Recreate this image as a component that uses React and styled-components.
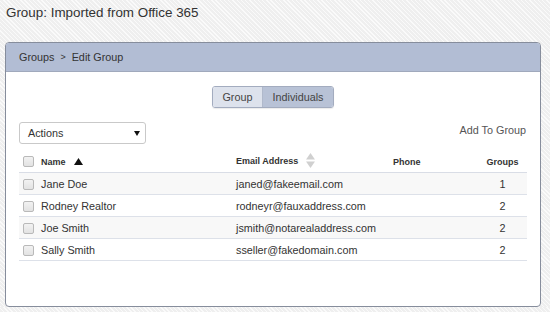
import React from 'react'
import styled, { createGlobalStyle } from 'styled-components'

const GlobalStyle = createGlobalStyle`
  html, body {
    margin: 0;
    padding: 0;
  }
  body {
    font-family: 'Liberation Sans', Arial, sans-serif;
    color: #333;
    background-color: #efefef;
    background-image: repeating-linear-gradient(
      45deg,
      rgba(255, 255, 255, 0.7) 0px,
      rgba(255, 255, 255, 0.7) 1px,
      transparent 1px,
      transparent 3px
    );
  }
`

const people = [
  { name: 'Jane Doe', email: 'janed@fakeemail.com', phone: '', groups: 1 },
  { name: 'Rodney Realtor', email: 'rodneyr@fauxaddress.com', phone: '', groups: 2 },
  { name: 'Joe Smith', email: 'jsmith@notarealaddress.com', phone: '', groups: 2 },
  { name: 'Sally Smith', email: 'sseller@fakedomain.com', phone: '', groups: 2 },
]

const Page = styled.div`
  padding: 4px 10px 0 5px;
  width: 550px;
  box-sizing: border-box;
`

const Title = styled.h1`
  margin: 0 0 0 1px;
  font-size: 13.4px;
  line-height: 18px;
  font-weight: normal;
  color: #333;
`

const Panel = styled.section`
  margin-top: 20px;
  width: 536px;
  height: 265px;
  box-sizing: border-box;
  border: 1px solid #868d9c;
  border-radius: 4px;
  background: #fff;
  overflow: hidden;
`

const PanelHeader = styled.div`
  display: flex;
  align-items: center;
  height: 28px;
  padding-left: 13px;
  background: #b2bdd4;
  border-bottom: 1px solid #a0a9bc;
  font-size: 10.8px;
  color: #333;
`

const Crumb = styled.span`
  margin: 0 ${(p) => (p.sep ? '6px' : '0')};
  font-size: ${(p) => (p.sep ? '9px' : 'inherit')};
`

const PanelBody = styled.div`
  padding: 14px 13px 0;
`

const ToggleRow = styled.div`
  display: flex;
  justify-content: center;
`

const ToggleGroup = styled.div`
  display: flex;
  border: 1px solid #a3acbf;
  border-radius: 3px;
  overflow: hidden;
  box-shadow: 0 1px 1px rgba(0, 0, 0, 0.08);
`

const ToggleButton = styled.div`
  height: 20px;
  line-height: 20px;
  padding: 0 9.5px;
  font-size: 10.8px;
  color: #444;
  background: ${(p) => (p.active ? '#b8c2d6' : '#dde2ec')};
  & + & {
    border-left: 1px solid #b0b9cb;
  }
`

const ActionsRow = styled.div`
  display: flex;
  justify-content: space-between;
  align-items: flex-start;
  margin-top: 14px;
`

const Select = styled.div`
  display: flex;
  align-items: center;
  justify-content: space-between;
  width: 127px;
  height: 22px;
  box-sizing: border-box;
  padding: 0 5px 0 8px;
  border: 1px solid #c9c9c9;
  border-radius: 3px;
  background: #fff;
  font-size: 10.8px;
  color: #333;
`

const LinkText = styled.span`
  font-size: 10.8px;
  line-height: 16px;
  color: #555;
  margin-right: 1px;
`

const Table = styled.table`
  width: 100%;
  margin-top: 7px;
  border-collapse: collapse;
  table-layout: fixed;
  font-size: 10.8px;
`

const Th = styled.th`
  height: 21px;
  padding: 0 0 0 ${(p) => p.pad || 0}px;
  text-align: ${(p) => p.align || 'left'};
  font-size: 9px;
  font-weight: bold;
  color: #333;
  white-space: nowrap;
  border-bottom: 1px solid #d9dde6;
`

const Tr = styled.tr`
  background: ${(p) => (p.striped ? '#f8f8f8' : '#fff')};
`

const Td = styled.td`
  height: 21px;
  padding: 0 0 0 ${(p) => p.pad || 0}px;
  text-align: ${(p) => p.align || 'left'};
  color: #333;
  white-space: nowrap;
  border-bottom: 1px solid #dde1e9;
`

const Checkbox = styled.span`
  display: inline-block;
  vertical-align: middle;
  width: 9px;
  height: 9px;
  border: 1px solid #b9b9b9;
  border-radius: 2px;
  background: linear-gradient(#f2f2f2, #e2e2e2);
`

const SortIcon = styled.svg`
  vertical-align: middle;
  margin-left: 8px;
  margin-top: -2px;
`

const SortUp = () => (
  <SortIcon width="9" height="7" viewBox="0 0 9 7">
    <path d="M4.5 0 L9 7 L0 7 Z" fill="#111" />
  </SortIcon>
)

const SortBoth = () => (
  <SortIcon width="9" height="15" viewBox="0 0 9 15">
    <path d="M4.5 0 L9 6.5 L0 6.5 Z" fill="#d0d0d0" />
    <path d="M0 8.5 L9 8.5 L4.5 15 Z" fill="#d0d0d0" />
  </SortIcon>
)

const Caret = () => (
  <svg width="6" height="5" viewBox="0 0 6 5">
    <path d="M0 0 L6 0 L3 5 Z" fill="#111" />
  </svg>
)

export default function App() {
  return (
    <Page>
      <GlobalStyle />
      <Title>Group: Imported from Office 365</Title>
      <Panel>
        <PanelHeader>
          <Crumb>Groups</Crumb>
          <Crumb sep>&gt;</Crumb>
          <Crumb>Edit Group</Crumb>
        </PanelHeader>
        <PanelBody>
          <ToggleRow>
            <ToggleGroup>
              <ToggleButton>Group</ToggleButton>
              <ToggleButton active>Individuals</ToggleButton>
            </ToggleGroup>
          </ToggleRow>
          <ActionsRow>
            <Select>
              <span>Actions</span>
              <Caret />
            </Select>
            <LinkText>Add To Group</LinkText>
          </ActionsRow>
          <Table>
            <colgroup>
              <col style={{ width: 22 }} />
              <col style={{ width: 195 }} />
              <col style={{ width: 157 }} />
              <col style={{ width: 85 }} />
              <col />
            </colgroup>
            <thead>
              <tr>
                <Th pad={4}>
                  <Checkbox />
                </Th>
                <Th>
                  Name
                  <SortUp />
                </Th>
                <Th>
                  Email Address
                  <SortBoth />
                </Th>
                <Th>Phone</Th>
                <Th align="center">Groups</Th>
              </tr>
            </thead>
            <tbody>
              {people.map((p, i) => (
                <Tr key={p.email} striped={i % 2 === 0}>
                  <Td pad={4}>
                    <Checkbox />
                  </Td>
                  <Td>{p.name}</Td>
                  <Td>{p.email}</Td>
                  <Td>{p.phone}</Td>
                  <Td align="center">{p.groups}</Td>
                </Tr>
              ))}
            </tbody>
          </Table>
        </PanelBody>
      </Panel>
    </Page>
  )
}
